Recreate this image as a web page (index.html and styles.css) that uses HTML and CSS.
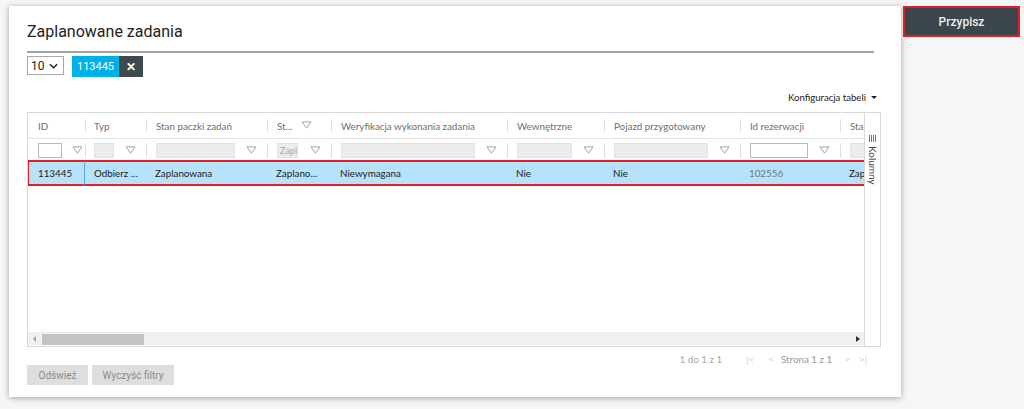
FILE: index.html
```html
<!DOCTYPE html>
<html lang="pl">
<head>
<meta charset="utf-8">
<title>Zaplanowane zadania</title>
<link rel="stylesheet" href="styles.css">
</head>
<body>
<div class="page">
  <section class="panel">
    <h1 class="title">Zaplanowane zadania</h1>
    <div class="rule"></div>
    <div class="toolbar">
      <div class="select">10 <svg class="chev" viewBox="0 0 10 6" width="9" height="6"><path d="M1 1l4 4 4-4" fill="none" stroke="#222" stroke-width="1.6"/></svg></div>
      <div class="chip"><span class="chip-text">113445</span><span class="chip-x">✕</span></div>
    </div>
    <div class="config-row"><span class="config">Konfiguracja tabeli</span><span class="caret"></span></div>

    <div class="grid">
      <div class="grid-main">
        <div class="row head">
          <div class="cell c1">ID</div>
          <div class="cell c2">Typ</div>
          <div class="cell c3">Stan paczki zadań</div>
          <div class="cell c4">St... <svg class="funnel" viewBox="0 0 12 10"><path d="M1 1h10L6 8z" fill="none" stroke="#999" stroke-width="1"/></svg></div>
          <div class="cell c5">Weryfikacja wykonania zadania</div>
          <div class="cell c6">Wewnętrzne</div>
          <div class="cell c7">Pojazd przygotowany</div>
          <div class="cell c8">Id rezerwacji</div>
          <div class="cell c9">Stan</div>
        </div>
        <div class="row filters">
          <div class="cell c1"><span class="fin white short"></span><svg class="funnel" viewBox="0 0 12 10"><path d="M1 1h10L6 8z" fill="none" stroke="#999" stroke-width="1"/></svg></div>
          <div class="cell c2"><span class="fin"></span><svg class="funnel" viewBox="0 0 12 10"><path d="M1 1h10L6 8z" fill="none" stroke="#999" stroke-width="1"/></svg></div>
          <div class="cell c3"><span class="fin"></span><svg class="funnel" viewBox="0 0 12 10"><path d="M1 1h10L6 8z" fill="none" stroke="#999" stroke-width="1"/></svg></div>
          <div class="cell c4"><span class="fin ph">Zapla</span><svg class="funnel" viewBox="0 0 12 10"><path d="M1 1h10L6 8z" fill="none" stroke="#999" stroke-width="1"/></svg></div>
          <div class="cell c5"><span class="fin"></span><svg class="funnel" viewBox="0 0 12 10"><path d="M1 1h10L6 8z" fill="none" stroke="#999" stroke-width="1"/></svg></div>
          <div class="cell c6"><span class="fin"></span><svg class="funnel" viewBox="0 0 12 10"><path d="M1 1h10L6 8z" fill="none" stroke="#999" stroke-width="1"/></svg></div>
          <div class="cell c7"><span class="fin"></span><svg class="funnel" viewBox="0 0 12 10"><path d="M1 1h10L6 8z" fill="none" stroke="#999" stroke-width="1"/></svg></div>
          <div class="cell c8"><span class="fin white"></span><svg class="funnel" viewBox="0 0 12 10"><path d="M1 1h10L6 8z" fill="none" stroke="#999" stroke-width="1"/></svg></div>
          <div class="cell c9"><span class="fin"></span></div>
        </div>
        <div class="row data selected">
          <div class="cell c1 focus">113445</div>
          <div class="cell c2">Odbierz ...</div>
          <div class="cell c3">Zaplanowana</div>
          <div class="cell c4">Zaplano...</div>
          <div class="cell c5">Niewymagana</div>
          <div class="cell c6">Nie</div>
          <div class="cell c7">Nie</div>
          <div class="cell c8 muted">102556</div>
          <div class="cell c9">Zaplanowana</div>
        </div>
        <div class="grid-empty"></div>
        <div class="hscroll">
          <span class="arr left"></span>
          <div class="track"><div class="thumb"></div></div>
          <span class="arr right"></span>
        </div>
      </div>
      <div class="side">
        <span class="bars"><i></i><i></i><i></i><i></i></span>
        <span class="side-label">Kolumny</span>
      </div>
    </div>

    <div class="pager">
      <span class="count">1 do 1 z 1</span>
      <span class="pg first">|&lt;</span>
      <span class="pg prev">&lt;</span>
      <span class="pg-text">Strona 1 z 1</span>
      <span class="pg next">&gt;</span>
      <span class="pg last">&gt;|</span>
    </div>
    <div class="actions">
      <button class="btn">Odśwież</button>
      <button class="btn">Wyczyść filtry</button>
    </div>
  </section>
  <button class="assign">Przypisz</button>
</div>
</body>
</html>
```

FILE: styles.css
```css
* { box-sizing: border-box; }
html, body { margin: 0; padding: 0; }
body {
  background: #f6f6f6;
  font-family: Lato, "Open Sans", sans-serif;
  width: 1024px;
  height: 409px;
  overflow: hidden;
}
.page {
  display: flex;
  align-items: flex-start;
  padding: 6px 0 0 9px;
}
.panel {
  width: 892px;
  height: 391px;
  background: #fff;
  box-shadow: 0 1px 6px rgba(0,0,0,0.35);
  padding: 13px 20px 0 18px;
  display: flex;
  flex-direction: column;
}
.title {
  margin: 0;
  font-family: Roboto, "Liberation Sans", sans-serif;
  font-weight: 400;
  font-size: 16px;
  line-height: 26px;
  color: #222;
}
.rule {
  height: 2px;
  background: #a3a3a3;
  margin: 6px 7px 0 0;
}
.toolbar {
  display: flex;
  align-items: flex-start;
  gap: 8px;
  margin-top: 3px;
  height: 21px;
}
.select {
  width: 37px;
  height: 19px;
  border: 1px solid #a8a8a8;
  font-family: Roboto, "Liberation Sans", sans-serif;
  font-size: 12px;
  color: #222;
  display: flex;
  align-items: center;
  justify-content: space-between;
  padding: 0 5px 0 3px;
}
.chev { display: block; }
.chip {
  display: flex;
  height: 21px;
  font-family: Roboto, "Liberation Sans", sans-serif;
  font-size: 11px;
}
.chip-text {
  background: #00b1e8;
  color: #fff;
  width: 47px;
  display: flex;
  align-items: center;
  justify-content: center;
}
.chip-x {
  background: #3d4a50;
  color: #fff;
  width: 24px;
  display: flex;
  align-items: center;
  justify-content: center;
  font-size: 12px;
  font-weight: 700;
}
.config-row {
  display: flex;
  justify-content: flex-end;
  align-items: center;
  gap: 5px;
  margin-top: 12px;
  height: 16px;
  padding-right: 4px;
  font-size: 9.6px;
  color: #222;
}
.caret {
  width: 0; height: 0;
  border-left: 3px solid transparent;
  border-right: 3px solid transparent;
  border-top: 3px solid #222;
}
.grid {
  margin-top: 7px;
  display: flex;
  height: 235px;
  border: 1px solid #d9d9d9;
}
.grid-main {
  width: 838px;
  overflow: hidden;
  display: flex;
  flex-direction: column;
}
.row {
  display: flex;
  flex: none;
  width: max-content;
  font-size: 9.8px;
}
.cell {
  flex: none;
  display: flex;
  align-items: center;
  padding-left: 10px;
  white-space: nowrap;
  overflow: hidden;
  position: relative;
}
.c1 { width: 57px; }
.c2 { width: 61px; padding-left: 9px; }
.c3 { width: 121px; }
.c4 { width: 64px; }
.c5 { width: 176px; }
.c6 { width: 97px; }
.c7 { width: 136px; }
.c8 { width: 100px; }
.c9 { width: 100px; }

.head { height: 26px; color: #6f6f6f; border-bottom: 1px solid #e3e3e3; }
.head .cell + .cell::before,
.filters .cell + .cell::before {
  content: "";
  position: absolute;
  left: 0;
  top: 6px;
  bottom: 6px;
  border-left: 1px solid #e1e1e1;
}
.head .c4 .funnel { margin-left: 8px; }
.funnel { width: 11px; height: 9px; flex: none; }

.filters { height: 22px; }
.filters .cell { padding-right: 10px; }
.filters .cell::before { top: 4px !important; bottom: 3px !important; }
.fin {
  flex: 1;
  height: 15px;
  background: #ececec;
  border: 1px solid #e2e2e2;
  margin-right: 11px;
  font-size: 9px;
  color: #aaa;
  line-height: 13px;
  padding-left: 2px;
  overflow: hidden;
}
.fin.white { background: #fff; border-color: #b8b8b8; }
.fin.short { flex: none; width: 24px; margin-right: 10px; }
.fin.ph { margin-right: 12px; }

.data {
  height: 24px;
  background: #b6e2fb;
  color: #222;
  outline: 2.5px solid #e41e27;
  outline-offset: -1px;
  margin-top: 0;
  width: 837px;
  overflow: hidden;
}
.data .focus { border-right: 1px solid #5aa9e6; }
.data .c2 { width: 60px; }
.data .muted { color: #6a7a86; }

.grid-empty { flex: 1; }
.hscroll {
  height: 13px;
  display: flex;
  align-items: center;
  background: #f1f1f1;
  border-top: 1px solid #ececec;
  margin-bottom: 1px;
}
.arr { width: 13px; height: 12px; display: flex; align-items: center; justify-content: center; flex: none; }
.arr.left::before {
  content: ""; border-top: 3px solid transparent; border-bottom: 3px solid transparent; border-right: 3px solid #a0a0a0;
}
.arr.right::before {
  content: ""; border-top: 3px solid transparent; border-bottom: 3px solid transparent; border-left: 4px solid #333;
}
.track { flex: 1; height: 100%; display: flex; align-items: center; }
.thumb { margin-left: 1px; width: 102px; height: 11px; background: #c4c4c4; }

.side {
  width: 16px;
  border-left: 1px solid #d9d9d9;
  display: flex;
  flex-direction: column;
  align-items: center;
  padding-top: 22px;
  gap: 4px;
}
.bars { display: flex; gap: 1px; }
.bars i { display: block; width: 1px; height: 7px; background: #777; }
.side-label {
  writing-mode: vertical-rl;
  font-size: 10px;
  line-height: 13px;
  color: #444;
}

.pager {
  display: flex;
  justify-content: flex-end;
  align-items: center;
  height: 12px;
  margin-top: 6px;
  padding-right: 14px;
  font-size: 9.8px;
  color: #a8a8a8;
}
.count { margin-right: 24px; }
.pg { color: #d0d0d0; }
.first { margin-right: 14px; }
.prev { margin-right: 7px; }
.pg-text { color: #999; margin-right: 12px; }
.next { margin-right: 9px; }

.actions {
  display: flex;
  gap: 4px;
}
.btn {
  height: 20px;
  border: none;
  background: #dedede;
  color: #8a8a8a;
  font-family: Roboto, "Liberation Sans", sans-serif;
  font-size: 10px;
  padding: 0;
  white-space: nowrap;
}
.btn:first-child { width: 61px; }
.btn:last-child { width: 82px; }

.assign {
  margin-left: 2px;
  width: 117px;
  height: 31px;
  background: #3c474d;
  border: 2px solid #e11d26;
  color: #eee;
  font-family: Roboto, "Liberation Sans", sans-serif;
  font-weight: 500;
  font-size: 12px;
}
```
